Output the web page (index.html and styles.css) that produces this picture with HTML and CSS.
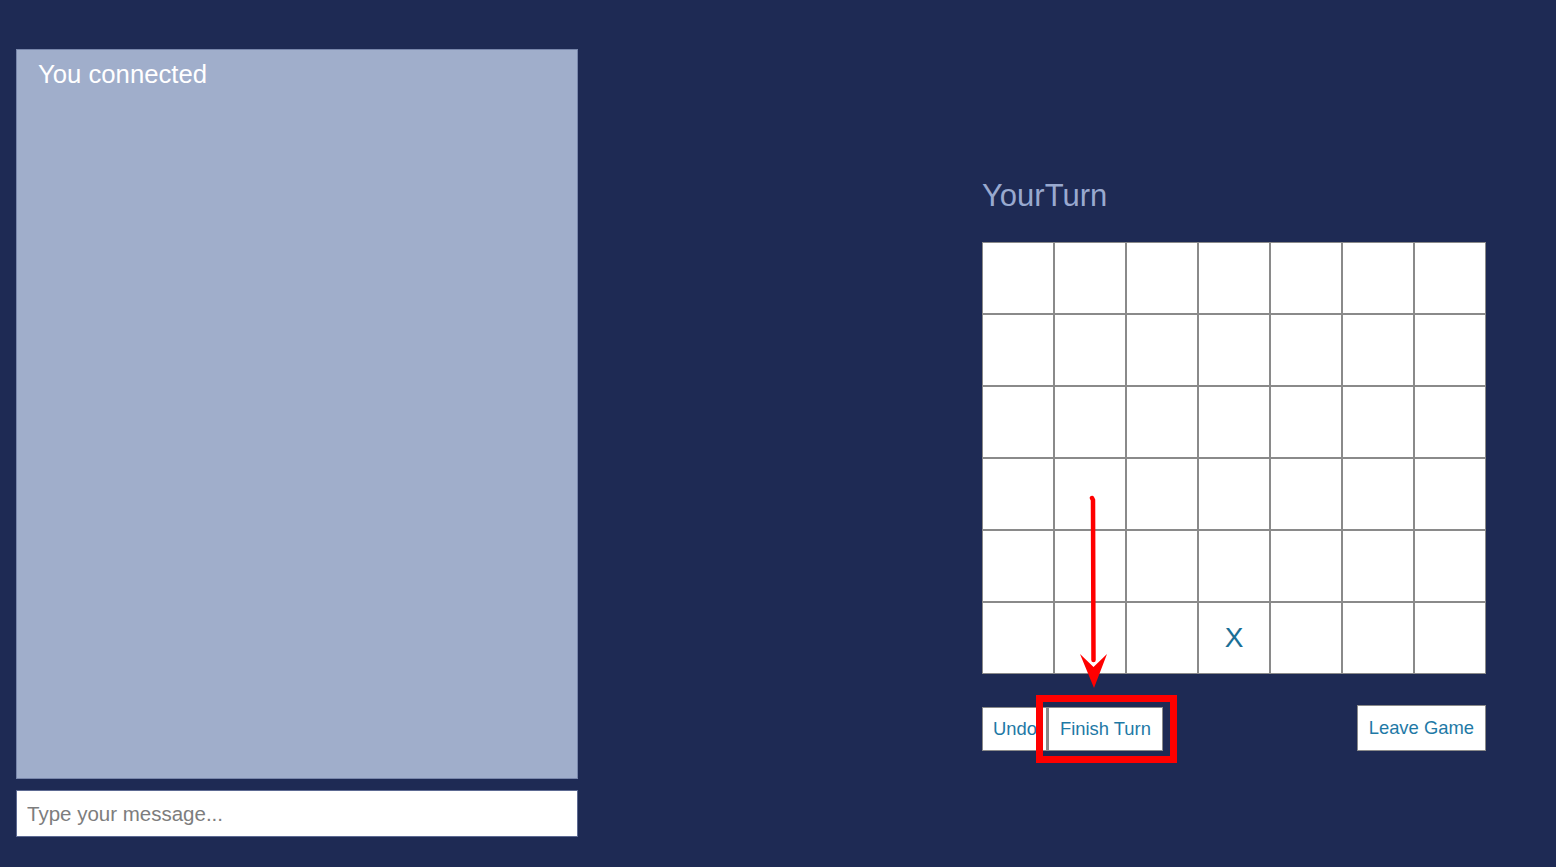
FILE: index.html
```html
<!DOCTYPE html>
<html lang="en">
<head>
<meta charset="utf-8">
<title>Game</title>
<link rel="stylesheet" href="styles.css">
</head>
<body>
<div class="page">
  <section class="chat">
    <div class="messages">
      <div class="message">You connected</div>
    </div>
    <input class="chat-input" type="text" placeholder="Type your message...">
  </section>
  <section class="game">
    <div class="status">YourTurn</div>
    <table class="board">
      <tbody>
        <tr><td></td><td></td><td></td><td></td><td></td><td></td><td></td></tr>
        <tr><td></td><td></td><td></td><td></td><td></td><td></td><td></td></tr>
        <tr><td></td><td></td><td></td><td></td><td></td><td></td><td></td></tr>
        <tr><td></td><td></td><td></td><td></td><td></td><td></td><td></td></tr>
        <tr><td></td><td></td><td></td><td></td><td></td><td></td><td></td></tr>
        <tr><td></td><td></td><td></td><td class="mark">X</td><td></td><td></td><td></td></tr>
      </tbody>
    </table>
    <div class="controls">
      <button class="btn btn-undo">Undo</button>
      <button class="btn btn-finish">Finish Turn</button>
      <button class="btn btn-leave">Leave Game</button>
    </div>
  </section>
</div>
<svg class="annotation" width="1556" height="867" viewBox="0 0 1556 867">
  <path d="M1092 498 L1093 500 L1093.5 660" stroke="#ff0000" stroke-width="4.5" fill="none" stroke-linecap="round"/>
  <path d="M1080 654 L1093.5 667 L1107 654 L1094 688 Z" fill="#ff0000"/>
  <rect x="1039.5" y="698.5" width="134" height="61" fill="none" stroke="#ff0000" stroke-width="7"/>
</svg>
</body>
</html>
```
FILE: styles.css
```css
html, body {
  margin: 0;
  padding: 0;
}
body {
  background: #1e2a54;
  font-family: "Liberation Sans", Arial, sans-serif;
  width: 1556px;
  height: 867px;
  overflow: hidden;
  position: relative;
}
.page {
  display: flex;
  align-items: flex-start;
  padding: 49px 0 0 16px;
}
.chat {
  width: 562px;
  display: flex;
  flex-direction: column;
  gap: 11px;
}
.messages {
  box-sizing: border-box;
  height: 730px;
  background: #a0aecb;
  border: 1px solid #7886ab;
  padding: 9px 21px;
}
.message {
  color: #ffffff;
  font-size: 25.7px;
  line-height: 30px;
}
.chat-input {
  box-sizing: border-box;
  height: 47px;
  width: 100%;
  margin: 0;
  border: 1px solid #5d6a92;
  background: #ffffff;
  padding: 0 10px;
  font-family: "Liberation Sans", Arial, sans-serif;
  font-size: 20.5px;
  color: #333;
  outline: none;
}
.chat-input::placeholder {
  color: #7d7d7d;
}
.game {
  margin-left: 404px;
  margin-top: 130px;
  width: 504px;
  display: flex;
  flex-direction: column;
}
.status {
  color: #99a9cf;
  font-size: 31px;
  line-height: 34px;
  height: 63px;
}
.board {
  border-collapse: separate;
  border-spacing: 0;
  background: #ffffff;
  table-layout: fixed;
  width: 504px;
}
.board td {
  box-sizing: border-box;
  width: 72px;
  height: 72px;
  padding: 0;
  border: 1px solid #8a8a8a;
  text-align: center;
  vertical-align: middle;
}
.board td.mark {
  color: #1a6f96;
  font-size: 28px;
}
.controls {
  display: flex;
  align-items: flex-end;
  margin-top: 31px;
}
.btn {
  box-sizing: border-box;
  height: 44px;
  margin: 0;
  padding: 0 11px;
  background: #ffffff;
  border: 1px solid #8a8a8a;
  border-radius: 0;
  color: #1e79a6;
  font-family: "Liberation Sans", Arial, sans-serif;
  font-size: 18.4px;
}
.btn-undo {
  padding: 0 9px 0 10px;
}
.btn-finish {
  border-left: 2px solid #8a8a8a;
  padding: 0 11px;
}
.btn-leave {
  margin-left: auto;
  height: 46px;
}
.annotation {
  position: absolute;
  left: 0;
  top: 0;
  pointer-events: none;
}
```
